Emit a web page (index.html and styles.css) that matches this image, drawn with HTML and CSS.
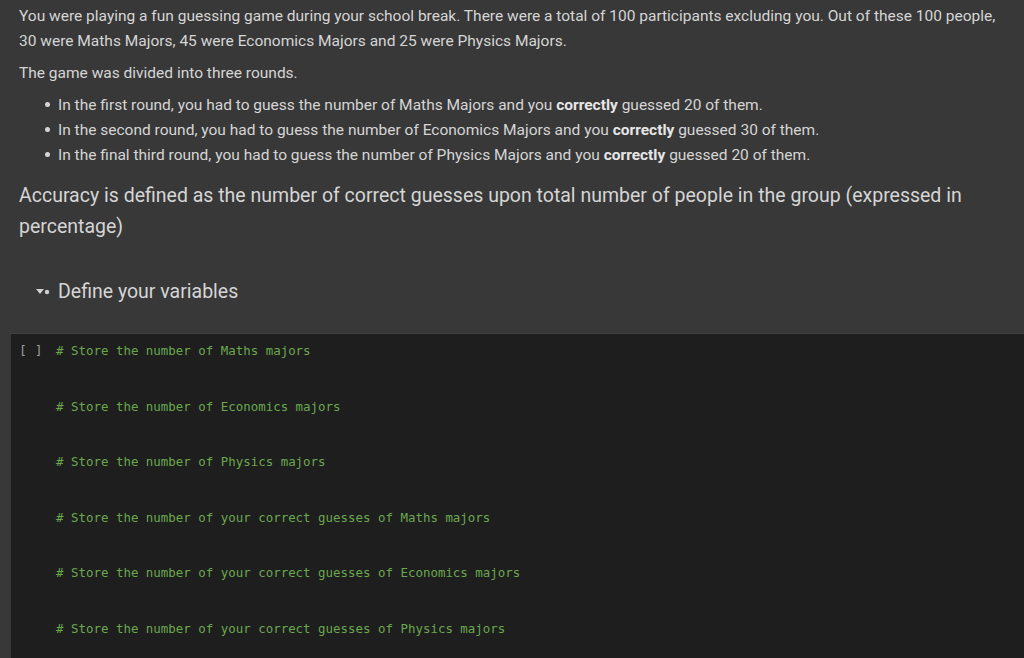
FILE: index.html
```html
<!DOCTYPE html>
<html>
<head>
<meta charset="utf-8">
<link rel="stylesheet" href="styles.css">
</head>
<body>
<div class="text-cell">
  <p class="para">You were playing a fun guessing game during your school break. There were a total of 100 participants excluding you. Out of these 100 people, 30 were Maths Majors, 45 were Economics Majors and 25 were Physics Majors.</p>
  <p class="para">The game was divided into three rounds.</p>
  <ul class="rounds">
    <li>In the first round, you had to guess the number of Maths Majors and you <b>correctly</b> guessed 20 of them.</li>
    <li>In the second round, you had to guess the number of Economics Majors and you <b>correctly</b> guessed 30 of them.</li>
    <li>In the final third round, you had to guess the number of Physics Majors and you <b>correctly</b> guessed 20 of them.</li>
  </ul>
  <p class="big">Accuracy is defined as the number of correct guesses upon total number of people in the group (expressed in percentage)</p>
</div>
<div class="section">
  <svg class="toggle" width="14" height="8" viewBox="0 0 14 8"><path d="M0 1 L8 1 L4 6 Z" fill="#d0d0d0"/><circle cx="11" cy="4" r="2.2" fill="#d0d0d0"/></svg>
  <span class="section-title">Define your variables</span>
</div>
<div class="code-cell">
  <span class="run">[ ]</span>
  <pre class="code"><span class="c"># Store the number of Maths majors</span>


<span class="c"># Store the number of Economics majors</span>


<span class="c"># Store the number of Physics majors</span>


<span class="c"># Store the number of your correct guesses of Maths majors</span>


<span class="c"># Store the number of your correct guesses of Economics majors</span>


<span class="c"># Store the number of your correct guesses of Physics majors</span></pre>
</div>
</body>
</html>
```
FILE: styles.css
```css
html, body {
  margin: 0;
  padding: 0;
  background: #383838;
  overflow: hidden;
}
body {
  font-family: Roboto, "Liberation Sans", sans-serif;
  color: #d5d5d5;
  width: 1024px;
  height: 658px;
}
.text-cell {
  padding: 4px 14px 0 19px;
}
.para {
  margin: 0 0 7px 0;
  font-size: 15.5px;
  line-height: 25px;
}
.rounds {
  margin: 0;
  padding-left: 39px;
  font-size: 15.5px;
  line-height: 25px;
}
.rounds li {
  list-style: none;
}
.rounds li::before {
  content: "";
  display: inline-block;
  width: 5px;
  height: 5px;
  border-radius: 50%;
  background: #d5d5d5;
  vertical-align: 3px;
  margin-left: -13px;
  margin-right: 8px;
}
.rounds b {
  font-weight: 700;
  color: #e6e6e6;
}
.big {
  margin: 12px 0 0 0;
  font-size: 19.5px;
  line-height: 31px;
}
.section {
  display: flex;
  align-items: center;
  padding: 0 0 0 36px;
  margin-top: 36px;
  height: 28px;
}
.toggle {
  margin-right: 8px;
}
.section-title {
  font-size: 19.5px;
  line-height: 28px;
}
.code-cell {
  margin: 27px 0 0 11px;
  background: #1e1e1e;
  border-top: 1px solid #404040;
  display: flex;
  padding: 8px 0 0 8px;
  height: 340px;
}
.run {
  font-family: "DejaVu Sans Mono", monospace;
  font-size: 13px;
  color: #9a9a9a;
  width: 37px;
  line-height: 18.5px;
  white-space: pre;
}
.code {
  margin: 0;
  font-family: "DejaVu Sans Mono", monospace;
  font-size: 12.45px;
  line-height: 18.5px;
}
.c {
  color: #6aa84f;
}
```
